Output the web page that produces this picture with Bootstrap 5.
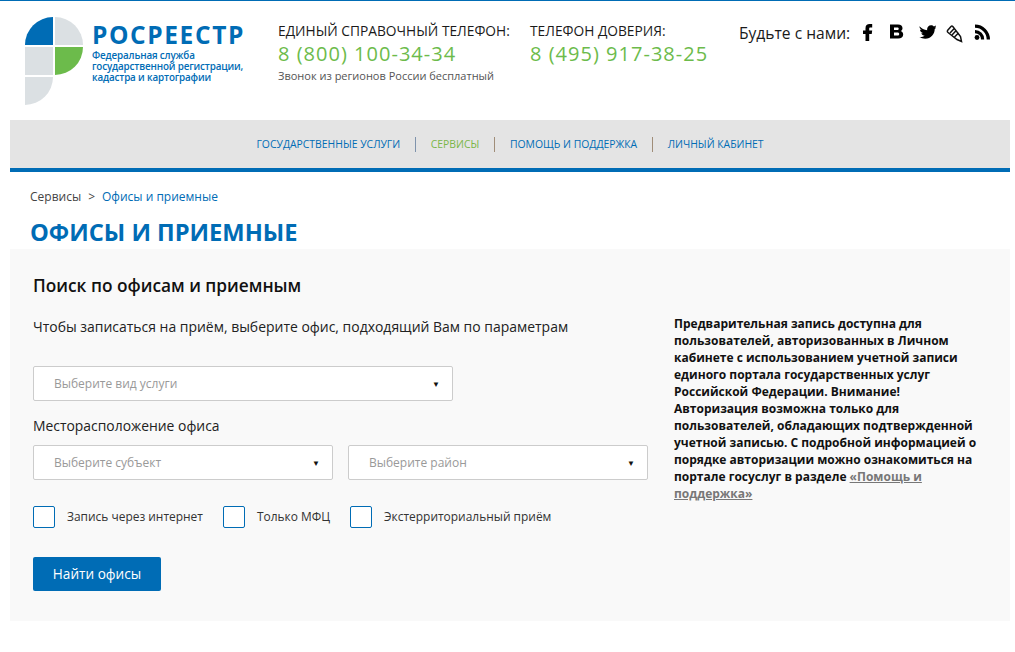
<!DOCTYPE html>
<html lang="ru"><head><meta charset="utf-8"><title>Офисы и приемные</title>
<link rel="stylesheet" href="https://cdn.jsdelivr.net/npm/bootstrap@5.3.0/dist/css/bootstrap.min.css">
<style>
html,body{height:652px;overflow:hidden}
body{font-family:"Open Sans","Liberation Sans",sans-serif;color:#1a1a1a;background:#fff;border-top:1px solid #006cb5}
.site-wrap{margin:0 5px 0 10px}
.top-head{height:119px;padding:14px 0 0 15px}
.logo-pic{width:60px;height:91px;flex:none;display:block}
.logo-box{width:253px;flex:none}
.logo-words{margin-left:7px;padding-top:6px;color:#006cb5}
.logo-name{font-size:24.5px;font-weight:700;line-height:28px;letter-spacing:1.6px}
.logo-sub{font-size:9.85px;line-height:11px;font-weight:600;margin-top:1px;white-space:nowrap;letter-spacing:-.15px}
.tel-one{width:252px;flex:none;padding-top:6px}
.tel-two{width:209px;flex:none;padding-top:6px}
.tel-label{font-size:13.76px;line-height:20px;color:#1a1a1a}
.tel-num{font-size:20px;line-height:28px;color:#6cbb4b;letter-spacing:1.02px;margin-top:-1px}
.tel-note{font-size:11px;line-height:16px;color:#555;margin-top:0}
.soc-box{padding-top:8px;font-size:15.6px;line-height:20px;white-space:nowrap}
.soc-row{margin-left:8px;gap:9px}
.soc-ico{width:20px;height:20px;display:block;flex:none}
.menu-bar{height:52px;background:#e4e4e4;border-bottom:4px solid #006cb5;font-size:10.4px;padding-top:1px}
.menu-bar a{color:#006cb5;text-decoration:none;text-transform:uppercase}
.menu-bar a.on{color:#7ab648}
.menu-sep{width:1px;height:15px;margin:0 14.8px;background:#7f93ac}
.menu-sep.warm{background:#a08d78}
.crumbs{font-size:12px;line-height:18px;padding:16px 0 0 20px;color:#444}
.crumbs a{color:#006cb5;text-decoration:none}
.crumbs i{font-style:normal;margin:0 7px}
.page-ttl{font-size:23.7px;line-height:32px;font-weight:700;color:#006cb5;margin:10px 0 0 20px;text-transform:uppercase}
.search-panel{background:#f9f9f9;height:372px;padding:23px 23px 0;margin-top:1px}
.panel-ttl{font-size:17.3px;line-height:28px;font-weight:600;color:#111;margin:0}
.panel-hint{font-size:13.96px;line-height:20px;margin:17px 0 0;color:#222}
.left-part{width:641px;flex:none}
.side-note{width:305px;padding-top:43px;font-size:12px;line-height:17px;font-weight:700;color:#111;flex:none}
.side-note a{color:#777}
.fake-sel{height:35px;background:#fff;border:1px solid #ccc;border-radius:2px;color:#999;font-size:12px;padding:0 12px 0 20px}
.fake-sel b{color:#111;font-size:8px;font-weight:400}
.sel-one{width:420px;margin-top:29px}
.sel-pair{width:615px}
.sel-half{width:300px}
.loc-label{font-size:13.9px;line-height:20px;margin:15px 0 9px;color:#222}
.check-row{margin-top:26px;font-size:11.95px;color:#333}
.check-item{margin-right:20px}
.check-box{width:22px;height:22px;background:#fff;border:1px solid #006cb5;border-radius:2px;margin-right:12px;flex:none}
.find-btn{margin-top:29px;width:128px;height:34px;background:#006cb5;border:0;border-radius:2px;color:#fff;font-size:13.6px;padding:0}
</style></head>
<body>
<div class="site-wrap">
<header class="top-head d-flex">
 <div class="logo-box d-flex">
  <svg class="logo-pic" viewBox="0 0 60 91">
   <path d="M0 30A28 28 0 0 1 28 2V30Z" fill="#006cb5"/>
   <path d="M30 2A28 28 0 0 1 58 30H30Z" fill="#dbe0e3"/>
   <rect x="0" y="32" width="28" height="28" fill="#dbe0e3"/>
   <path d="M30 32H58A28 28 0 0 1 30 60Z" fill="#6cbb4b"/>
   <path d="M0 62H28A28 28 0 0 1 0 90Z" fill="#dbe0e3"/>
  </svg>
  <div class="logo-words">
   <div class="logo-name">РОСРЕЕСТР</div>
   <div class="logo-sub">Федеральная служба<br>государственной регистрации,<br>кадастра и картографии</div>
  </div>
 </div>
 <div class="tel-one">
  <div class="tel-label">ЕДИНЫЙ СПРАВОЧНЫЙ ТЕЛЕФОН:</div>
  <div class="tel-num">8 (800) 100-34-34</div>
  <div class="tel-note">Звонок из регионов России бесплатный</div>
 </div>
 <div class="tel-two">
  <div class="tel-label">ТЕЛЕФОН ДОВЕРИЯ:</div>
  <div class="tel-num">8 (495) 917-38-25</div>
 </div>
 <div class="soc-box d-flex align-items-start">
  <span>Будьте с нами:</span>
  <div class="soc-row d-flex">
   <svg class="soc-ico" viewBox="0 0 20 20"><path d="M7.500 18V11H5V7.500H7.500V5.200C7.500 2.300 9 1 11.700 1H14.200V4.500H12.500C11.500 4.500 11.200 5 11.200 5.800V7.500H14.200L13.700 11H11.200V18Z"/></svg>
   <svg class="soc-ico" viewBox="0 1.500 20 20"><path fill-rule="evenodd" d="M3 3H11C14 3 15.500 4.400 15.500 6.800C15.500 8.300 14.700 9.200 13.600 9.600C15.100 10 16.200 11.200 16.200 13C16.200 15.800 14.100 17 11.200 17H3ZM7 5.900V8.500H10.200C11.200 8.500 11.700 8 11.700 7.200S11.200 5.900 10.200 5.900ZM7 11V14H10.500C11.500 14 12.200 13.500 12.200 12.500S11.500 11 10.500 11Z"/></svg>
   <svg class="soc-ico" viewBox="-2 1 20 20"><path d="M1.500 4.300C3.500 6.600 6.100 8 9.200 8.200C8.700 5.600 10.500 3.200 13 3.200C14.200 3.200 15.200 3.700 15.900 4.400C16.800 4.200 17.500 3.900 18.200 3.500C17.900 4.400 17.400 5.100 16.600 5.600C17.400 5.500 18 5.300 18.500 5.100C18 5.900 17.300 6.500 16.700 7C16.900 12 13 16.800 7.200 16.800C5.100 16.800 3.100 16.200 1.500 15.100C3.500 15.300 5.200 14.800 6.700 13.700C5.100 13.600 3.800 12.600 3.300 11.200C3.900 11.300 4.400 11.300 4.900 11.100C3.200 10.700 2 9.200 2 7.500C2.500 7.800 3 7.900 3.600 7.900C2 6.900 1.400 5.800 1.500 4.300Z"/></svg>
   <svg class="soc-ico" viewBox="0 0 20 20" fill="none" stroke="#111" stroke-width="1.500"><path d="M2.500 7.500L6 3.500C6.500 3 7.300 3 7.800 3.500L15.500 13.500L16.500 18.500L12 16.500L3 9.500C2.300 9 2.200 8.200 2.500 7.500Z"/><path d="M5 10L9 5.800M7 12L11 7.800M9.500 14L13.500 10"/></svg>
   <svg class="soc-ico" viewBox="2 1 20 20"><circle cx="5" cy="15.500" r="2.400"/><path d="M3 8V11.200A6 6 0 0 1 9 17.500H12.200A9.200 9.200 0 0 0 3 8Z"/><path d="M3 2.500V5.800A11.700 11.700 0 0 1 14.700 17.500H18A15 15 0 0 0 3 2.500Z"/></svg>
  </div>
 </div>
</header>
<nav class="menu-bar d-flex justify-content-center align-items-center">
 <a href="#">Государственные услуги</a><span class="menu-sep"></span>
 <a href="#" class="on">Сервисы</a><span class="menu-sep warm"></span>
 <a href="#">Помощь и поддержка</a><span class="menu-sep warm"></span>
 <a href="#">Личный кабинет</a>
</nav>
<div class="crumbs">Сервисы<i>&gt;</i><a href="#">Офисы и приемные</a></div>
<h1 class="page-ttl">Офисы и приемные</h1>
<section class="search-panel d-flex">
 <div class="left-part">
  <h2 class="panel-ttl">Поиск по офисам и приемным</h2>
  <p class="panel-hint">Чтобы записаться на приём, выберите офис, подходящий Вам по параметрам</p>
  <div class="fake-sel sel-one d-flex align-items-center justify-content-between"><span>Выберите вид услуги</span><b>▼</b></div>
  <div class="loc-label">Месторасположение офиса</div>
  <div class="sel-pair d-flex justify-content-between">
   <div class="fake-sel sel-half d-flex align-items-center justify-content-between"><span>Выберите субъект</span><b>▼</b></div>
   <div class="fake-sel sel-half d-flex align-items-center justify-content-between"><span>Выберите район</span><b>▼</b></div>
  </div>
  <div class="check-row d-flex align-items-center">
   <label class="check-item d-flex align-items-center"><span class="check-box"></span>Запись через интернет</label>
   <label class="check-item d-flex align-items-center"><span class="check-box"></span>Только МФЦ</label>
   <label class="check-item d-flex align-items-center"><span class="check-box"></span>Экстерриториальный приём</label>
  </div>
  <button class="btn find-btn" type="button">Найти офисы</button>
 </div>
 <aside class="side-note">Предварительная запись доступна для пользователей, авторизованных в Личном кабинете с использованием учетной записи единого портала государственных услуг Российской Федерации. Внимание! Авторизация возможна только для пользователей, обладающих подтвержденной учетной записью. С подробной информацией о порядке авторизации можно ознакомиться на портале госуслуг в разделе <a href="#">«Помощь и поддержка»</a></aside>
</section>
</div>
<script src="https://cdn.jsdelivr.net/npm/bootstrap@5.3.0/dist/js/bootstrap.bundle.min.js"></script>
</body></html>
